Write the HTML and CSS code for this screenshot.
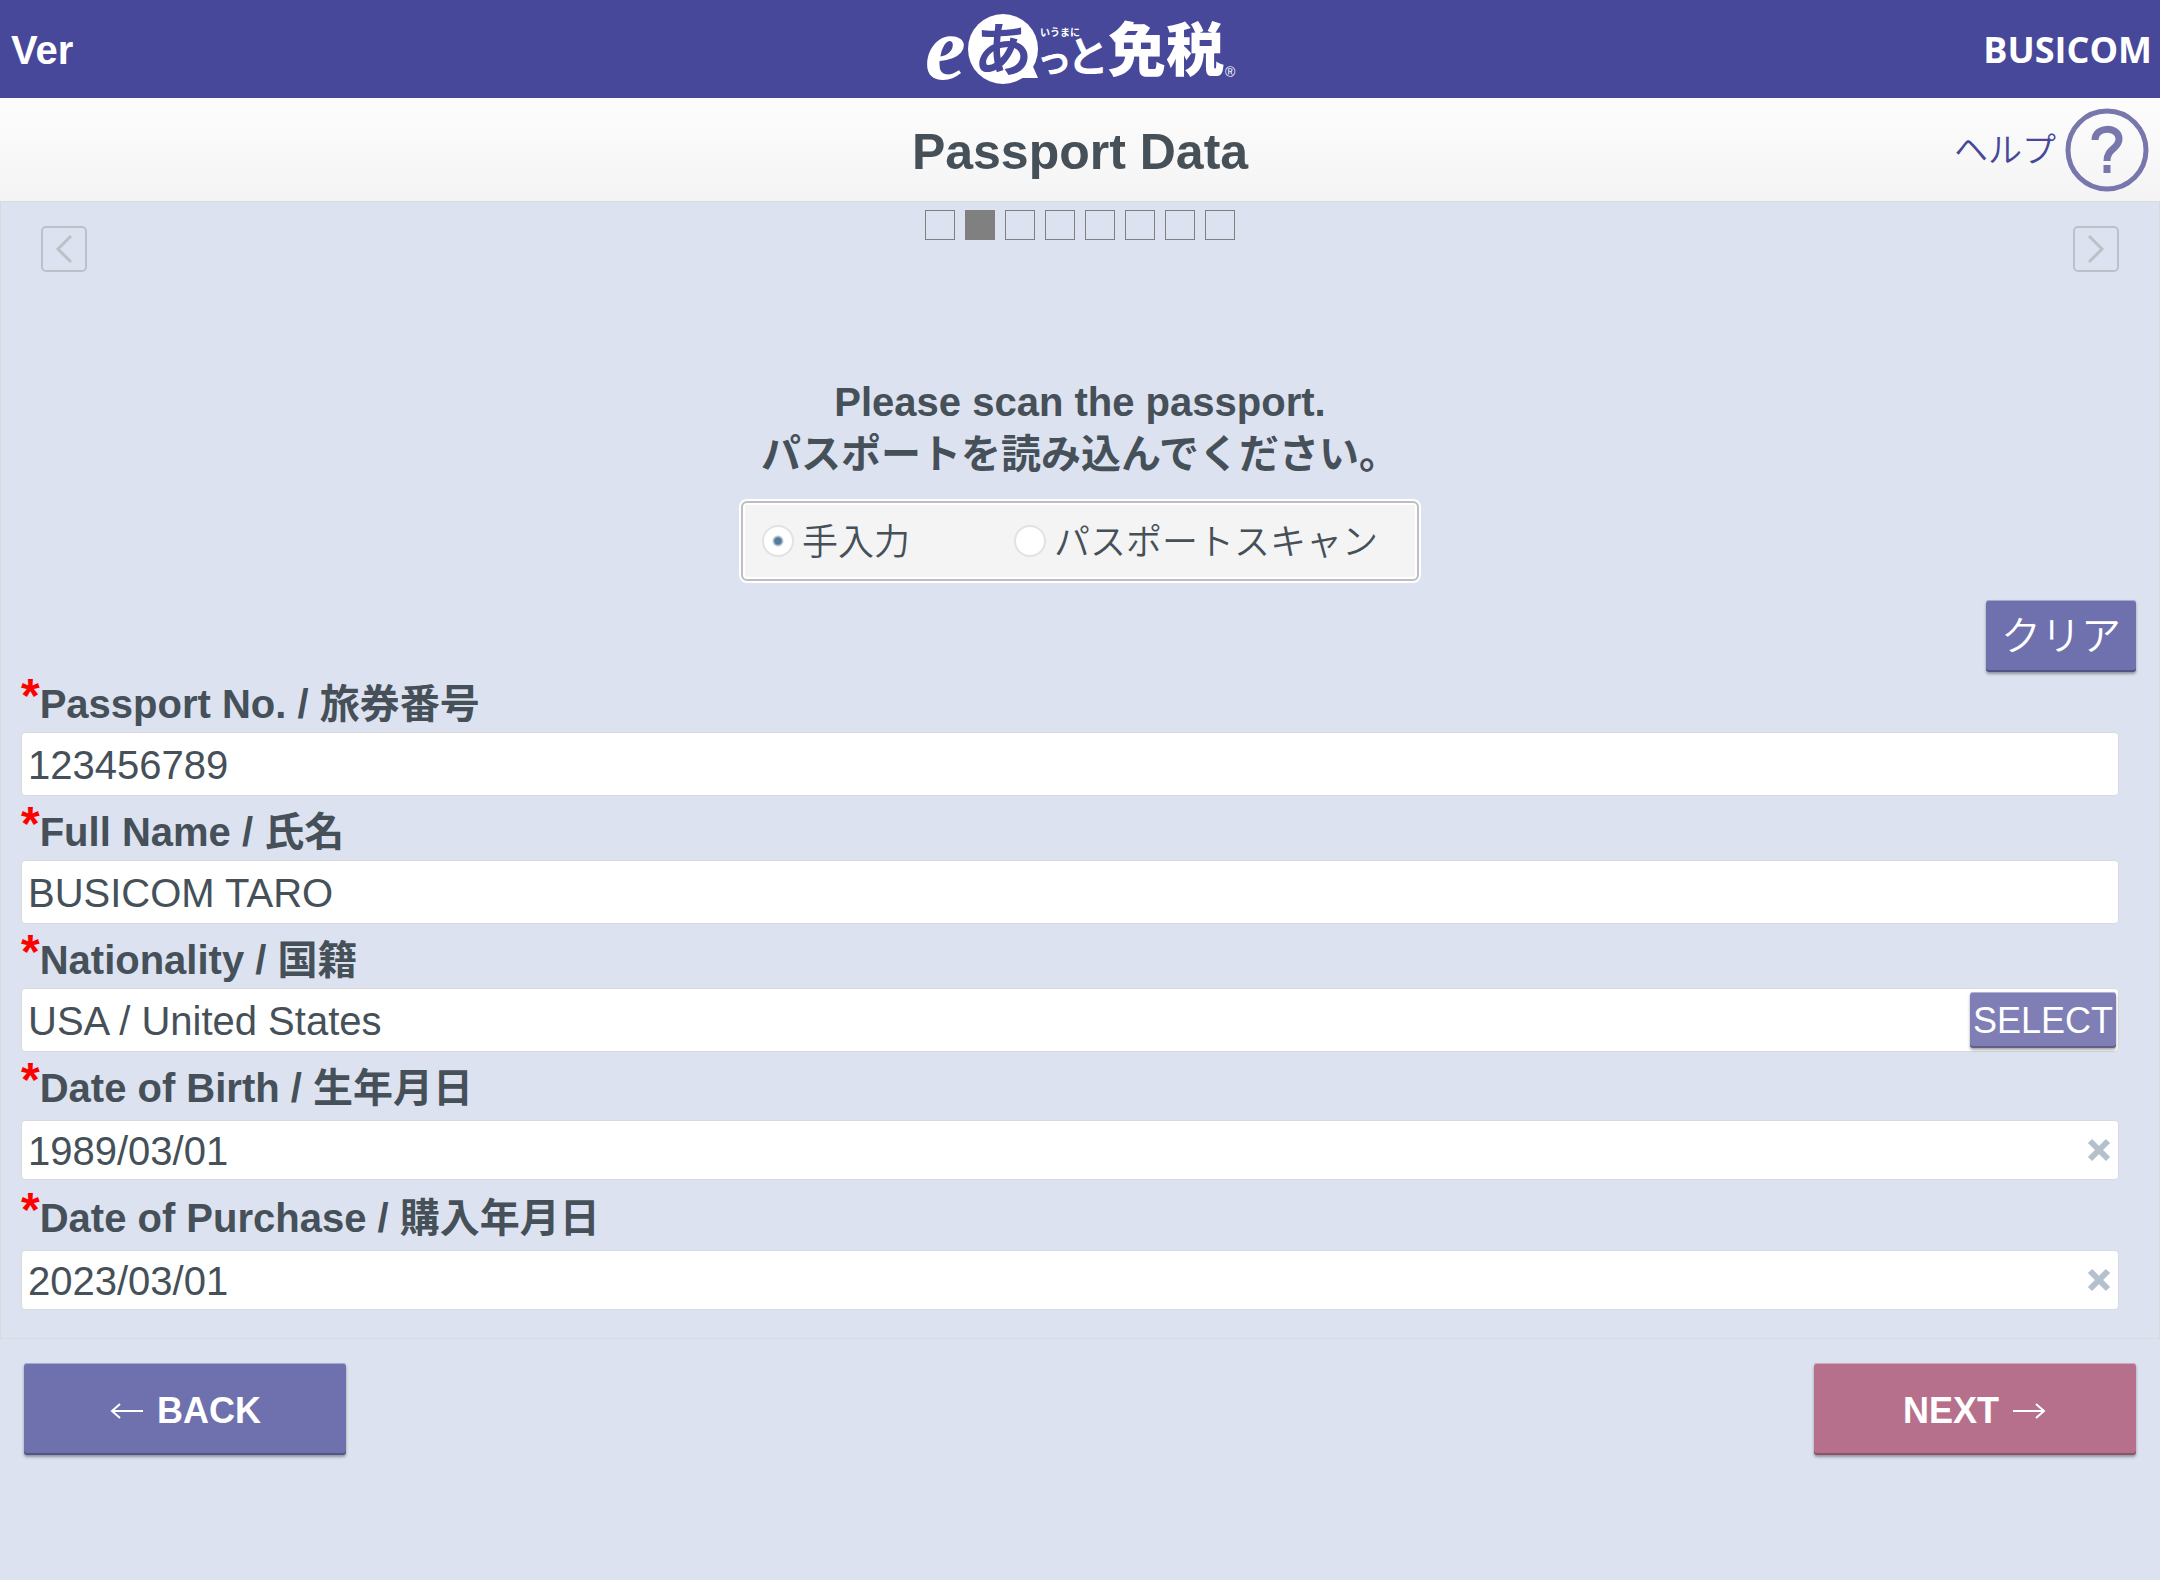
FILE: index.html
```html
<!DOCTYPE html>
<html lang="ja">
<head>
    <meta charset="UTF-8">
    <meta name="viewport" content="width=device-width, initial-scale=1.0">
    <title>Passport Data</title>
    <link rel="stylesheet" href="styles.css">
</head>
<body>

    <header class="topbar">
        <span class="version">Ver</span>
        <svg class="logo" width="320" height="98" viewBox="0 -12 320 98" role="img" aria-label="logo">
            <text class="logo-e" x="3" y="67">e</text>
            <circle cx="81" cy="37" r="35" fill="#fff"/>
            <path d="M109 50 L116 66 L97 66 Z" fill="#fff"/>
            <text class="logo-a" x="52" y="59">あ</text>
            <text class="logo-ruby" x="118" y="24">いうまに</text>
            <text class="logo-kana small" x="114" y="61">っ</text>
            <text class="logo-kana" x="145" y="60">と</text>
            <text class="logo-kanji" x="186" y="59">免税</text>
            <text class="logo-reg" x="303" y="65">®</text>
        </svg>
        <span class="brand">BUSICOM</span>
    </header>

    <div class="titlebar">
        <h1>Passport Data</h1>
        <a class="help" href="#">
            <span>ヘルプ</span>
            <svg width="84" height="84" viewBox="0 0 84 84" fill="none" stroke="#7777ad">
                <circle cx="42" cy="42" r="39" stroke-width="5"/>
                <path d="M30 32 C30 18 54 18 54 31 C54 41 42 40 42 53" stroke-width="7"/>
                <path d="M42 57 V65" stroke-width="7"/>
            </svg>
        </a>
    </div>

    <form id="passport-form">
        <main class="panel">
            <div class="pager">
                <button type="button" class="nav" aria-label="Previous">
                    <svg width="42" height="42" viewBox="0 0 42 42"><path d="M28 8 L15 21 L28 34"/></svg>
                </button>
                <ol class="steps">
                    <li></li>
                    <li class="current"></li>
                    <li></li>
                    <li></li>
                    <li></li>
                    <li></li>
                    <li></li>
                    <li></li>
                </ol>
                <button type="button" class="nav" aria-label="Next">
                    <svg width="42" height="42" viewBox="0 0 42 42"><path d="M14 8 L27 21 L14 34"/></svg>
                </button>
            </div>

            <p class="prompt">Please scan the passport.<br>パスポートを読み込んでください。</p>

            <div class="modes">
                <label><input type="radio" name="mode" value="manual" checked><span>手入力</span></label>
                <label><input type="radio" name="mode" value="scan"><span>パスポートスキャン</span></label>
            </div>

            <div class="tools">
                <button type="reset" class="btn clear">クリア</button>
            </div>

            <div class="field">
                <label for="passport-no"><span class="req">*</span>Passport No. / 旅券番号</label>
                <div class="box"><input type="text" id="passport-no" value="123456789"></div>
            </div>
            <div class="field">
                <label for="full-name"><span class="req">*</span>Full Name / 氏名</label>
                <div class="box"><input type="text" id="full-name" value="BUSICOM TARO"></div>
            </div>
            <div class="field">
                <label for="nationality"><span class="req">*</span>Nationality / 国籍</label>
                <div class="box">
                    <input type="text" id="nationality" value="USA / United States">
                    <button type="button" class="btn select">SELECT</button>
                </div>
            </div>
            <div class="field date">
                <label for="birth"><span class="req">*</span>Date of Birth / 生年月日</label>
                <div class="box">
                    <input type="text" id="birth" value="1989/03/01">
                    <button type="button" class="erase" aria-label="Clear date">
                        <svg width="24" height="24" viewBox="0 0 24 24"><path d="M3 3 L21 21 M21 3 L3 21"/></svg>
                    </button>
                </div>
            </div>
            <div class="field date">
                <label for="purchase"><span class="req">*</span>Date of Purchase / 購入年月日</label>
                <div class="box">
                    <input type="text" id="purchase" value="2023/03/01">
                    <button type="button" class="erase" aria-label="Clear date">
                        <svg width="24" height="24" viewBox="0 0 24 24"><path d="M3 3 L21 21 M21 3 L3 21"/></svg>
                    </button>
                </div>
            </div>
        </main>

        <footer class="actions">
            <button type="button" class="btn step">
                <svg width="36" height="16" viewBox="0 0 36 16"><path d="M34 8 H3 M11 1 L3 8 L11 15"/></svg>
                BACK
            </button>
            <button type="submit" class="btn step next">
                NEXT
                <svg width="36" height="16" viewBox="0 0 36 16"><path d="M2 8 H33 M25 1 L33 8 L25 15"/></svg>
            </button>
        </footer>
    </form>

</body>
</html>
```

FILE: styles.css
```css
* {
    box-sizing: border-box;
}
body {
    margin: 0;
    min-height: 100vh;
    background-color: #dde2f0;
    color: #455059;
    font-family: "Liberation Sans", "Noto Sans CJK JP", sans-serif;
    font-size: 40px;
}
button, input {
    font-family: inherit;
    color: inherit;
}
button {
    cursor: pointer;
}

/* top bar */
.topbar {
    display: grid;
    grid-template-columns: 1fr auto 1fr;
    align-items: center;
    height: 98px;
    padding: 0 8px 0 11px;
    background-color: #47489a;
    color: #fff;
}
.version {
    padding-top: 2px;
    font-weight: bold;
}
.brand {
    justify-self: end;
    font-family: "Open Sans", sans-serif;
    font-size: 36px;
    font-weight: bold;
}
.logo text {
    fill: #fff;
    font-family: "Noto Sans CJK JP", sans-serif;
    font-weight: bold;
}
.logo .logo-e {
    font-family: "Liberation Serif", serif;
    font-size: 92px;
    font-style: italic;
    font-weight: bold;
}
.logo .logo-a {
    fill: #47489a;
    font-size: 58px;
}
.logo .logo-ruby {
    font-size: 10px;
}
.logo .logo-kana {
    font-size: 42px;
}
.logo .small {
    font-size: 36px;
}
.logo .logo-kanji {
    font-size: 58px;
    font-weight: 900;
}
.logo .logo-reg {
    font-family: "Liberation Sans", sans-serif;
    font-size: 14px;
    font-weight: normal;
}

/* title bar */
.titlebar {
    display: grid;
    grid-template-columns: 1fr auto 1fr;
    align-items: center;
    height: 103px;
    padding: 0 11px;
    background: linear-gradient(#fdfdfd, #f4f4f4);
}
h1 {
    grid-column: 2;
    margin: 0;
    padding-top: 4px;
    font-size: 50px;
}
.help {
    display: flex;
    justify-self: end;
    align-items: center;
    gap: 9px;
    color: #47489a;
    font-size: 34px;
    font-weight: 350;
    text-decoration: none;
}
.help span {
    padding-bottom: 4px;
}

/* main panel */
.panel {
    padding: 8px 20px 28px;
    border: 1px solid #d9dadd;
}
.pager {
    display: flex;
    justify-content: space-between;
    padding: 0 20px;
}
.nav {
    display: flex;
    width: 46px;
    height: 46px;
    margin-top: 16px;
    padding: 0;
    border: 2px solid #bcc1c9;
    border-radius: 5px;
    background: none;
}
.nav path {
    fill: none;
    stroke: #bcc1c9;
    stroke-width: 3;
}
.steps {
    display: flex;
    gap: 10px;
    margin: 0;
    padding: 0;
    list-style: none;
}
.steps li {
    width: 30px;
    height: 30px;
    border: 1px solid #808080;
}
.steps .current {
    background-color: #808080;
}
.prompt {
    margin: 104px 0 21px;
    line-height: 52px;
    font-weight: bold;
    text-align: center;
}
.modes {
    display: flex;
    gap: 104px;
    align-items: center;
    width: max-content;
    height: 80px;
    margin: 0 auto;
    padding: 0 39px 0 19px;
    border: 2px solid #bebebe;
    border-radius: 6px;
    background-color: #f4f4f4;
    box-shadow: 0 0 0 2px #fff, inset 0 0 0 2px #fff;
    font-size: 36px;
    font-weight: 350;
}
.modes label {
    display: flex;
    align-items: center;
    gap: 8px;
}
.modes span {
    padding-bottom: 4px;
}
.modes input {
    appearance: none;
    width: 32px;
    height: 32px;
    margin: 0;
    border: 2px solid #e2e2e2;
    border-radius: 50%;
    background-color: #fff;
}
.modes input:checked {
    background-image: radial-gradient(circle, #55799c 3px, #fff 6px);
}
.tools {
    display: flex;
    justify-content: flex-end;
    margin: 19px 3px 8px;
}

/* buttons */
.btn {
    border: none;
    border-radius: 3px;
    background-color: #6f70ae;
    box-shadow: inset 0 1px 0 rgba(255, 255, 255, 0.4), inset 0 -2px 0 rgba(0, 0, 0, 0.25), 0 2px 3px rgba(0, 0, 0, 0.35);
    color: #fff;
}
.clear {
    height: 72px;
    padding: 0 15px 6px;
    font-size: 40px;
    font-weight: 350;
}
.select {
    height: 56px;
    padding: 2px 3px 0;
    background-color: #807fb5;
    font-size: 36px;
}

/* fields */
.field {
    margin: 0 20px 12px 0;
}
.field label {
    display: block;
    height: 48px;
    margin-bottom: 4px;
    line-height: 48px;
    font-weight: bold;
}
.req {
    color: #f00;
    font-size: 48px;
    line-height: 0;
    vertical-align: 6px;
}
.box {
    display: flex;
    align-items: center;
    height: 64px;
    padding-right: 2px;
    border: 1px solid #d9dadd;
    border-radius: 4px;
    background-color: #fff;
}
.box input {
    flex: 1;
    min-width: 0;
    padding: 2px 6px 0;
    border: none;
    outline: none;
    background: none;
    font-size: 40px;
}
.date {
    margin-bottom: 14px;
}
.date label {
    margin-bottom: 8px;
}
.date .box {
    height: 60px;
    padding-right: 7px;
}
.panel .field:last-child {
    margin-bottom: 0;
}
.erase {
    display: flex;
    padding: 0;
    border: none;
    background: none;
}
.erase path {
    stroke: #b4c1cc;
    stroke-width: 6;
}

/* bottom buttons */
.actions {
    display: flex;
    justify-content: space-between;
    padding: 24px;
}
.step {
    display: flex;
    justify-content: center;
    align-items: center;
    gap: 12px;
    width: 322px;
    height: 92px;
    padding-top: 4px;
    font-size: 36px;
    font-weight: bold;
}
.step path {
    fill: none;
    stroke: #fff;
    stroke-width: 2;
}
.next {
    background-color: #b6708c;
}
```
